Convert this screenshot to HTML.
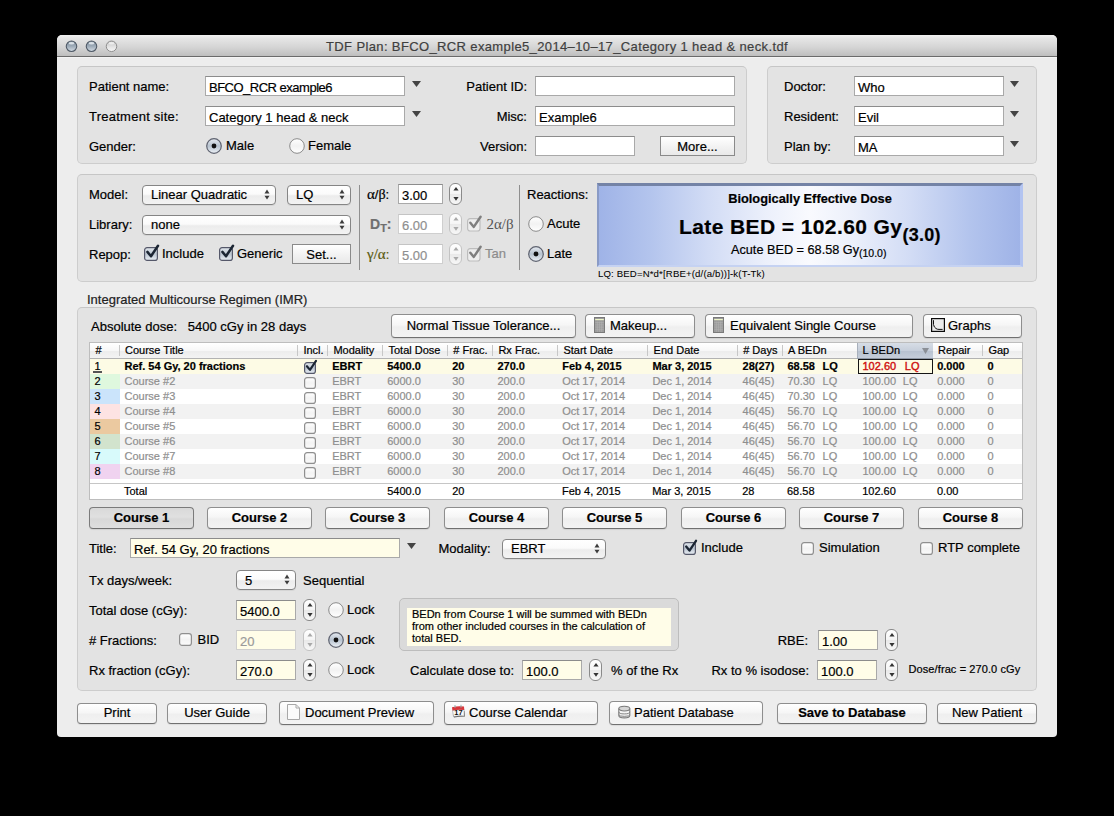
<!DOCTYPE html>
<html><head><meta charset="utf-8"><style>
html,body{margin:0;padding:0;}
body{width:1114px;height:816px;background:#000;position:relative;overflow:hidden;font-family:"Liberation Sans",sans-serif;color:#000;}
.a{position:absolute;}
.t{position:absolute;white-space:nowrap;-webkit-text-stroke-width:0.2px;}
</style></head><body>
<svg width="0" height="0" style="position:absolute"><defs>
<linearGradient id="cbg" x1="0" y1="0" x2="0" y2="1"><stop offset="0" stop-color="#e4e9ef"/><stop offset="0.5" stop-color="#bcc6d2"/><stop offset="1" stop-color="#e9eef4"/></linearGradient>
<linearGradient id="cbw" x1="0" y1="0" x2="0" y2="1"><stop offset="0" stop-color="#ffffff"/><stop offset="0.5" stop-color="#f3f3f3"/><stop offset="1" stop-color="#fbfbfb"/></linearGradient>
</defs></svg>

<div class="a" style="left:57px;top:35px;width:1000px;height:702px;background:#ededed;border-radius:5px 5px 4px 4px;overflow:hidden;"></div>
<div class="a" style="left:57px;top:35px;width:1000px;height:21px;border-radius:5px 5px 0 0;background:linear-gradient(#f2f2f2 0%,#e6e6e6 15%,#d4d4d4 60%,#bebebe 100%);"></div>
<div class="a" style="left:57px;top:56px;width:1000px;height:1px;background:#6a6a6a;"></div>
<div class="a" style="left:57px;top:57px;width:1000px;height:1px;background:#f4f4f4;"></div>
<svg class="a" style="left:64.5px;top:39.5px" width="13" height="13"><defs><linearGradient id="tl0" x1="0" y1="0" x2="0" y2="1"><stop offset="0" stop-color="#7c8a99"/><stop offset="0.5" stop-color="#9eacb9"/><stop offset="1" stop-color="#d5dde5"/></linearGradient></defs><circle cx="6.5" cy="6.3" r="5.25" fill="url(#tl0)" stroke="#4f5a66" stroke-width="1.1"/><ellipse cx="6.5" cy="3.3" rx="2.8" ry="1.3" fill="#e9eef3" opacity="0.85"/></svg>
<svg class="a" style="left:84.5px;top:39.5px" width="13" height="13"><defs><linearGradient id="tl1" x1="0" y1="0" x2="0" y2="1"><stop offset="0" stop-color="#7c8a99"/><stop offset="0.5" stop-color="#9eacb9"/><stop offset="1" stop-color="#d5dde5"/></linearGradient></defs><circle cx="6.5" cy="6.3" r="5.25" fill="url(#tl1)" stroke="#4f5a66" stroke-width="1.1"/><ellipse cx="6.5" cy="3.3" rx="2.8" ry="1.3" fill="#e9eef3" opacity="0.85"/></svg>
<svg class="a" style="left:104.5px;top:39.5px" width="13" height="13"><defs><linearGradient id="tl2" x1="0" y1="0" x2="0" y2="1"><stop offset="0" stop-color="#c4c4c4"/><stop offset="0.6" stop-color="#e6e6e6"/><stop offset="1" stop-color="#f6f6f6"/></linearGradient></defs><circle cx="6.5" cy="6.3" r="5.25" fill="url(#tl2)" stroke="#8e8e8e" stroke-width="1"/><ellipse cx="6.5" cy="3.3" rx="2.8" ry="1.2" fill="#f4f4f4" opacity="0.8"/></svg>
<div class="t" style="left:57px;width:1000px;text-align:center;top:40.00px;font-size:13px;line-height:13px;color:#3f3f3f;letter-spacing:0.37px;">TDF Plan: BFCO_RCR example5_2014&#8211;10&#8211;17_Category 1 head &amp; neck.tdf</div>
<div class="a" style="left:77px;top:66px;width:670px;height:98px;box-sizing:border-box;background:#e3e3e3;border:1px solid #cdcdcd;border-top-color:#c6c6c6;border-radius:5px;"></div>
<div class="t" style="left:89px;top:80.00px;font-size:13px;line-height:13px;">Patient name:</div>
<div class="a" style="left:205px;top:76px;width:200px;height:20px;box-sizing:border-box;background:#fff;border:1px solid #a9a9a9;border-top-color:#8c8c8c;"></div>
<div class="t" style="left:209px;top:81.00px;font-size:13px;line-height:13px;letter-spacing:-0.5px;">BFCO_RCR example6</div>
<svg class="a" style="left:412px;top:81px" width="9" height="6"><path d="M0 0H9L4.5 6Z" fill="#444"/></svg>
<div class="t" style="left:89px;top:110.00px;font-size:13px;line-height:13px;letter-spacing:0.25px;">Treatment site:</div>
<div class="a" style="left:205px;top:106px;width:200px;height:20px;box-sizing:border-box;background:#fff;border:1px solid #a9a9a9;border-top-color:#8c8c8c;"></div>
<div class="t" style="left:209px;top:111.00px;font-size:13px;line-height:13px;">Category 1 head &amp; neck</div>
<svg class="a" style="left:412px;top:111px" width="9" height="6"><path d="M0 0H9L4.5 6Z" fill="#444"/></svg>
<div class="t" style="left:89px;top:140.00px;font-size:13px;line-height:13px;">Gender:</div>
<svg class="a" style="left:206px;top:138px" width="16" height="16"><defs><linearGradient id="rg206138" x1="0" y1="0" x2="0" y2="1"><stop offset="0" stop-color="#e6ebf1"/><stop offset="0.5" stop-color="#b7c2cf"/><stop offset="1" stop-color="#edf2f7"/></linearGradient></defs><circle cx="8" cy="8" r="7.3" fill="url(#rg206138)" stroke="#5f6370" stroke-width="1.2"/><circle cx="8" cy="8" r="2.4" fill="#111"/></svg>
<div class="t" style="left:226px;top:139.00px;font-size:13px;line-height:13px;">Male</div>
<svg class="a" style="left:289px;top:138px" width="16" height="16"><defs><linearGradient id="rg289138" x1="0" y1="0" x2="0" y2="1"><stop offset="0" stop-color="#ffffff"/><stop offset="0.5" stop-color="#f2f2f2"/><stop offset="1" stop-color="#ffffff"/></linearGradient></defs><circle cx="8" cy="8" r="7.3" fill="url(#rg289138)" stroke="#8a8a8a" stroke-width="1"/></svg>
<div class="t" style="left:308px;top:139.00px;font-size:13px;line-height:13px;">Female</div>
<div class="t" style="right:587px;top:80.00px;font-size:13px;line-height:13px;">Patient ID:</div>
<div class="a" style="left:535px;top:76px;width:200px;height:20px;box-sizing:border-box;background:#fff;border:1px solid #a9a9a9;border-top-color:#8c8c8c;"></div>
<div class="t" style="right:587px;top:110.00px;font-size:13px;line-height:13px;">Misc:</div>
<div class="a" style="left:535px;top:106px;width:200px;height:20px;box-sizing:border-box;background:#fff;border:1px solid #a9a9a9;border-top-color:#8c8c8c;"></div>
<div class="t" style="left:539px;top:111.00px;font-size:13px;line-height:13px;">Example6</div>
<div class="t" style="right:587px;top:140.00px;font-size:13px;line-height:13px;">Version:</div>
<div class="a" style="left:535px;top:136px;width:100px;height:20px;box-sizing:border-box;background:#fff;border:1px solid #a9a9a9;border-top-color:#8c8c8c;"></div>
<div class="a" style="left:660px;top:136px;width:75px;height:20px;box-sizing:border-box;border:1px solid #8a8a8a;background:linear-gradient(#ffffff,#f1f1f1 60%,#e9e9e9);"></div>
<div class="t" style="left:660px;width:75px;text-align:center;top:140.00px;font-size:13px;line-height:13px;">More...</div>
<div class="a" style="left:767px;top:66px;width:270px;height:98px;box-sizing:border-box;background:#e3e3e3;border:1px solid #cdcdcd;border-top-color:#c6c6c6;border-radius:5px;"></div>
<div class="t" style="left:784px;top:80.00px;font-size:13px;line-height:13px;">Doctor:</div>
<div class="a" style="left:854px;top:76px;width:150px;height:20px;box-sizing:border-box;background:#fff;border:1px solid #a9a9a9;border-top-color:#8c8c8c;"></div>
<div class="t" style="left:858px;top:81.00px;font-size:13px;line-height:13px;">Who</div>
<svg class="a" style="left:1010px;top:81px" width="9" height="6"><path d="M0 0H9L4.5 6Z" fill="#444"/></svg>
<div class="t" style="left:784px;top:110.00px;font-size:13px;line-height:13px;">Resident:</div>
<div class="a" style="left:854px;top:106px;width:150px;height:20px;box-sizing:border-box;background:#fff;border:1px solid #a9a9a9;border-top-color:#8c8c8c;"></div>
<div class="t" style="left:858px;top:111.00px;font-size:13px;line-height:13px;">Evil</div>
<svg class="a" style="left:1010px;top:111px" width="9" height="6"><path d="M0 0H9L4.5 6Z" fill="#444"/></svg>
<div class="t" style="left:784px;top:140.00px;font-size:13px;line-height:13px;">Plan by:</div>
<div class="a" style="left:854px;top:136px;width:150px;height:20px;box-sizing:border-box;background:#fff;border:1px solid #a9a9a9;border-top-color:#8c8c8c;"></div>
<div class="t" style="left:858px;top:141.00px;font-size:13px;line-height:13px;">MA</div>
<svg class="a" style="left:1010px;top:141px" width="9" height="6"><path d="M0 0H9L4.5 6Z" fill="#444"/></svg>
<div class="a" style="left:77px;top:174px;width:960px;height:108px;box-sizing:border-box;background:#e3e3e3;border:1px solid #cdcdcd;border-top-color:#c6c6c6;border-radius:5px;"></div>
<div class="t" style="left:89px;top:188.00px;font-size:13px;line-height:13px;">Model:</div>
<div class="a" style="left:142px;top:185px;width:134px;height:20px;box-sizing:border-box;border:1px solid #858585;border-radius:4px;background:linear-gradient(#ffffff 0%,#fbfbfb 45%,#ececec 55%,#f3f3f3 100%);box-shadow:0 1px 0 rgba(0,0,0,0.06);"></div>
<div class="t" style="left:151px;top:188.00px;font-size:13px;line-height:13px;">Linear Quadratic</div>
<svg class="a" style="left:264px;top:189.0px" width="6" height="12"><path d="M0.5 4.4H5.5L3 0.6Z M0.5 6.8H5.5L3 10.6Z" fill="#3c3c3c"/></svg>
<div class="a" style="left:287px;top:185px;width:64px;height:20px;box-sizing:border-box;border:1px solid #858585;border-radius:4px;background:linear-gradient(#ffffff 0%,#fbfbfb 45%,#ececec 55%,#f3f3f3 100%);box-shadow:0 1px 0 rgba(0,0,0,0.06);"></div>
<div class="t" style="left:296px;top:188.00px;font-size:13px;line-height:13px;">LQ</div>
<svg class="a" style="left:339px;top:189.0px" width="6" height="12"><path d="M0.5 4.4H5.5L3 0.6Z M0.5 6.8H5.5L3 10.6Z" fill="#3c3c3c"/></svg>
<div class="t" style="left:89px;top:218.00px;font-size:13px;line-height:13px;">Library:</div>
<div class="a" style="left:142px;top:215px;width:209px;height:20px;box-sizing:border-box;border:1px solid #858585;border-radius:4px;background:linear-gradient(#ffffff 0%,#fbfbfb 45%,#ececec 55%,#f3f3f3 100%);box-shadow:0 1px 0 rgba(0,0,0,0.06);"></div>
<div class="t" style="left:151px;top:218.00px;font-size:13px;line-height:13px;">none</div>
<svg class="a" style="left:339px;top:219.0px" width="6" height="12"><path d="M0.5 4.4H5.5L3 0.6Z M0.5 6.8H5.5L3 10.6Z" fill="#3c3c3c"/></svg>
<div class="t" style="left:89px;top:248.00px;font-size:13px;line-height:13px;">Repop:</div>
<svg class="a" style="left:144px;top:244px;overflow:visible" width="16" height="17"><rect x="0.6" y="3.6" width="12.8" height="12.8" rx="2.5" fill="url(#cbg)" stroke="#55586a" stroke-width="1.2"/><path d="M3.40 7.90L7.00 12.20L14.00 1.70" fill="none" stroke="#1b2533" stroke-width="2.50" stroke-linecap="round" stroke-linejoin="round"/></svg>
<div class="t" style="left:162px;top:247.00px;font-size:13px;line-height:13px;">Include</div>
<svg class="a" style="left:219px;top:244px;overflow:visible" width="16" height="17"><rect x="0.6" y="3.6" width="12.8" height="12.8" rx="2.5" fill="url(#cbg)" stroke="#55586a" stroke-width="1.2"/><path d="M3.40 7.90L7.00 12.20L14.00 1.70" fill="none" stroke="#1b2533" stroke-width="2.50" stroke-linecap="round" stroke-linejoin="round"/></svg>
<div class="t" style="left:237px;top:247.00px;font-size:13px;line-height:13px;">Generic</div>
<div class="a" style="left:292px;top:244px;width:59px;height:20px;box-sizing:border-box;border:1px solid #8a8a8a;background:linear-gradient(#ffffff,#f1f1f1 60%,#e9e9e9);"></div>
<div class="t" style="left:292px;width:59px;text-align:center;top:248.00px;font-size:13px;line-height:13px;">Set...</div>
<div class="a" style="left:359px;top:185px;width:1px;height:85px;background:#8f8f8f;"></div>
<div class="t" style="left:367px;top:188.00px;font-size:13px;line-height:13px;"><span style="font-family:Liberation Serif,serif;font-size:15px">&#945;</span>/<span style="font-family:Liberation Serif,serif;font-size:14px">&#946;</span>:</div>
<div class="a" style="left:398px;top:184px;width:45px;height:20px;box-sizing:border-box;background:#fff;border:1px solid #a9a9a9;border-top-color:#8c8c8c;"></div>
<div class="t" style="left:402px;top:188.50px;font-size:13px;line-height:13px;">3.00</div>
<div class="a" style="left:449px;top:183px;width:13px;height:22px;box-sizing:border-box;border:1px solid #8a8a8a;border-radius:6px;background:linear-gradient(#fff,#f5f5f5 48%,#e9e9e9 52%,#f7f7f7);"></div>
<svg class="a" style="left:452.5px;top:183px" width="6" height="22"><path d="M0.4 7.6H5.6L3 3.9Z M0.4 14H5.6L3 17.8Z" fill="#333"/></svg>
<div class="t" style="left:370px;top:217.15px;font-size:14px;line-height:14px;font-weight:bold;color:#6f6f6f;">D<span style="font-size:11px;position:relative;top:3px">T</span>:</div>
<div class="a" style="left:398px;top:214px;width:45px;height:20px;box-sizing:border-box;background:#fff;border:1px solid #cfcfcf;border-top-color:#c4c4c4;"></div>
<div class="t" style="left:402px;top:218.50px;font-size:13px;line-height:13px;color:#8f8f8f;">6.00</div>
<div class="a" style="left:449px;top:213px;width:13px;height:22px;box-sizing:border-box;border:1px solid #c3c3c3;border-radius:6px;background:linear-gradient(#fff,#f5f5f5 48%,#e9e9e9 52%,#f7f7f7);"></div>
<svg class="a" style="left:452.5px;top:213px" width="6" height="22"><path d="M0.4 7.6H5.6L3 3.9Z M0.4 14H5.6L3 17.8Z" fill="#a9a9a9"/></svg>
<svg class="a" style="left:467px;top:215px;overflow:visible" width="15.6" height="16.6"><rect x="0.6" y="3.6" width="12.4" height="12.4" rx="2.5" fill="#eeeeee" stroke="#bdbdbd" stroke-width="1.2"/><path d="M3.30 7.76L6.80 11.94L13.60 1.74" fill="none" stroke="#7f7f7f" stroke-width="2.43" stroke-linecap="round" stroke-linejoin="round"/></svg>
<div class="t" style="left:486.5px;top:217.30px;font-size:15px;line-height:15px;color:#555;font-family:Liberation Serif,serif;-webkit-text-stroke-width:0;">2&#945;/&#946;</div>
<div class="t" style="left:367px;top:248.00px;font-size:13px;line-height:13px;color:#5a5a10;"><span style="font-family:Liberation Serif,serif;font-size:15px">&#947;/&#945;</span>:</div>
<div class="a" style="left:398px;top:244px;width:45px;height:20px;box-sizing:border-box;background:#fff;border:1px solid #cfcfcf;border-top-color:#c4c4c4;"></div>
<div class="t" style="left:402px;top:248.50px;font-size:13px;line-height:13px;color:#8f8f8f;">5.00</div>
<div class="a" style="left:449px;top:243px;width:13px;height:22px;box-sizing:border-box;border:1px solid #c3c3c3;border-radius:6px;background:linear-gradient(#fff,#f5f5f5 48%,#e9e9e9 52%,#f7f7f7);"></div>
<svg class="a" style="left:452.5px;top:243px" width="6" height="22"><path d="M0.4 7.6H5.6L3 3.9Z M0.4 14H5.6L3 17.8Z" fill="#a9a9a9"/></svg>
<svg class="a" style="left:467px;top:245px;overflow:visible" width="15.6" height="16.6"><rect x="0.6" y="3.6" width="12.4" height="12.4" rx="2.5" fill="#eeeeee" stroke="#bdbdbd" stroke-width="1.2"/><path d="M3.30 7.76L6.80 11.94L13.60 1.74" fill="none" stroke="#7f7f7f" stroke-width="2.43" stroke-linecap="round" stroke-linejoin="round"/></svg>
<div class="t" style="left:485px;top:247.00px;font-size:13px;line-height:13px;color:#8c8c8c;">Tan</div>
<div class="a" style="left:519px;top:185px;width:1px;height:85px;background:#8f8f8f;"></div>
<div class="t" style="left:527px;top:188.00px;font-size:13px;line-height:13px;">Reactions:</div>
<svg class="a" style="left:528px;top:216px" width="16" height="16"><defs><linearGradient id="rg528216" x1="0" y1="0" x2="0" y2="1"><stop offset="0" stop-color="#ffffff"/><stop offset="0.5" stop-color="#f2f2f2"/><stop offset="1" stop-color="#ffffff"/></linearGradient></defs><circle cx="8" cy="8" r="7.3" fill="url(#rg528216)" stroke="#8a8a8a" stroke-width="1"/></svg>
<div class="t" style="left:547px;top:217.00px;font-size:13px;line-height:13px;">Acute</div>
<svg class="a" style="left:528px;top:246px" width="16" height="16"><defs><linearGradient id="rg528246" x1="0" y1="0" x2="0" y2="1"><stop offset="0" stop-color="#e6ebf1"/><stop offset="0.5" stop-color="#b7c2cf"/><stop offset="1" stop-color="#edf2f7"/></linearGradient></defs><circle cx="8" cy="8" r="7.3" fill="url(#rg528246)" stroke="#5f6370" stroke-width="1.2"/><circle cx="8" cy="8" r="2.4" fill="#111"/></svg>
<div class="t" style="left:547px;top:247.00px;font-size:13px;line-height:13px;">Late</div>
<div class="a" style="left:597px;top:183px;width:426px;height:84px;box-sizing:border-box;border-top:3px solid #7483a6;border-left:2px solid #8a9bc6;border-right:3px solid #b3c4f1;border-bottom:2px solid #c5d2f2;background:linear-gradient(90deg,#9fb3e7 0%,#b3c4ed 12%,#d2dcf5 26%,#ecf0fb 40%,#f9fafe 50%,#ecf0fb 60%,#d2dcf5 74%,#b3c4ed 88%,#9fb3e7 100%);"></div>
<div class="t" style="left:597px;width:426px;text-align:center;top:193.16px;font-size:12.8px;line-height:12.8px;font-weight:bold;">Biologically Effective Dose</div>
<div class="t" style="left:679px;top:215.72px;font-size:21px;line-height:21px;font-weight:bold;letter-spacing:0.4px;">Late BED = 102.60 Gy<span style="font-size:18px;position:relative;top:7px;letter-spacing:0.3px">(3.0)</span></div>
<div class="t" style="left:731px;top:244.25px;font-size:12.7px;line-height:12.7px;">Acute BED = 68.58 Gy<span style="font-size:10.5px;position:relative;top:3px">(10.0)</span></div>
<div class="t" style="left:598px;top:268.87px;font-size:9.6px;line-height:9.6px;letter-spacing:0.15px;-webkit-text-stroke-width:0.05px;">LQ: BED=N*d*[RBE+(d/(a/b))]-k(T-Tk)</div>
<div class="t" style="left:87px;top:293.00px;font-size:13px;line-height:13px;color:#222;">Integrated Multicourse Regimen (IMR)</div>
<div class="a" style="left:77px;top:307px;width:960px;height:384px;box-sizing:border-box;background:#e3e3e3;border:1px solid #cdcdcd;border-top-color:#c6c6c6;border-radius:5px;"></div>
<div class="t" style="left:91px;top:320.00px;font-size:13px;line-height:13px;">Absolute dose:&nbsp;&nbsp; 5400 cGy in 28 days</div>
<div class="a" style="left:391px;top:314px;width:185px;height:24px;box-sizing:border-box;border:1px solid #8e8e8e;border-bottom-color:#707070;border-radius:4px;background:linear-gradient(#ffffff,#f6f6f6 45%,#efefef 55%,#f3f3f3);box-shadow:0 1px 1px rgba(0,0,0,0.08);"></div>
<div class="t" style="left:391px;width:185px;text-align:center;top:319.00px;font-size:13px;line-height:13px;">Normal Tissue Tolerance...</div>
<div class="a" style="left:585px;top:314px;width:110px;height:24px;box-sizing:border-box;border:1px solid #8e8e8e;border-bottom-color:#707070;border-radius:4px;background:linear-gradient(#ffffff,#f6f6f6 45%,#efefef 55%,#f3f3f3);box-shadow:0 1px 1px rgba(0,0,0,0.08);"></div>
<div class="t" style="left:610px;top:319.00px;font-size:13px;line-height:13px;">Makeup...</div>
<svg class="a" style="left:594px;top:317px" width="11" height="16"><rect x="0.5" y="0.5" width="10" height="15" fill="#9c9c9c" stroke="#7a7a7a"/><rect x="1.2" y="2" width="8.6" height="1.2" fill="#eef6c8"/><path d="M1.2 5.5H9.8M1.2 7.8H9.8M1.2 10.1H9.8M1.2 12.4H9.8M3.4 4.5V15M5.5 4.5V15M7.6 4.5V15" stroke="#b0b0b0" stroke-width="0.6"/></svg>
<div class="a" style="left:705px;top:314px;width:208px;height:24px;box-sizing:border-box;border:1px solid #8e8e8e;border-bottom-color:#707070;border-radius:4px;background:linear-gradient(#ffffff,#f6f6f6 45%,#efefef 55%,#f3f3f3);box-shadow:0 1px 1px rgba(0,0,0,0.08);"></div>
<div class="t" style="left:730px;top:319.00px;font-size:13px;line-height:13px;">Equivalent Single Course</div>
<svg class="a" style="left:713px;top:317px" width="11" height="16"><rect x="0.5" y="0.5" width="10" height="15" fill="#9c9c9c" stroke="#7a7a7a"/><rect x="1.2" y="2" width="8.6" height="1.2" fill="#eef6c8"/><path d="M1.2 5.5H9.8M1.2 7.8H9.8M1.2 10.1H9.8M1.2 12.4H9.8M3.4 4.5V15M5.5 4.5V15M7.6 4.5V15" stroke="#b0b0b0" stroke-width="0.6"/></svg>
<div class="a" style="left:923px;top:314px;width:99px;height:24px;box-sizing:border-box;border:1px solid #8e8e8e;border-bottom-color:#707070;border-radius:4px;background:linear-gradient(#ffffff,#f6f6f6 45%,#efefef 55%,#f3f3f3);box-shadow:0 1px 1px rgba(0,0,0,0.08);"></div>
<div class="t" style="left:948px;top:319.00px;font-size:13px;line-height:13px;">Graphs</div>
<svg class="a" style="left:931px;top:318px" width="14" height="14"><rect x="0.6" y="0.6" width="12.8" height="12.8" fill="#ececec" stroke="#0a0a0a" stroke-width="1.2"/><path d="M2.5 2.2V6.5Q3 9.5 5 10.5Q6 11.4 8 11.4H11.6" fill="none" stroke="#111" stroke-width="1"/></svg>
<div class="a" style="left:89px;top:342px;width:934px;height:158px;box-sizing:border-box;background:#fff;border:1px solid #bdbdbd;"></div>
<div class="a" style="left:90px;top:343px;width:932px;height:15px;background:linear-gradient(#ffffff,#f7f7f7 50%,#ececec 51%,#f3f3f3);border-bottom:1px solid #b2b2b2;"></div>
<div class="a" style="left:857px;top:343px;width:75px;height:15px;background:linear-gradient(#d7dde6,#c7cfdb 50%,#b7c1cf 51%,#c5cdd9);border-bottom:1px solid #8f98a6;border-left:1px solid #a8b0bc;"></div>
<div class="a" style="left:119px;top:345px;width:1px;height:11px;background:#c7c7c7;"></div>
<div class="a" style="left:297px;top:345px;width:1px;height:11px;background:#c7c7c7;"></div>
<div class="a" style="left:327px;top:345px;width:1px;height:11px;background:#c7c7c7;"></div>
<div class="a" style="left:382px;top:345px;width:1px;height:11px;background:#c7c7c7;"></div>
<div class="a" style="left:447px;top:345px;width:1px;height:11px;background:#c7c7c7;"></div>
<div class="a" style="left:492px;top:345px;width:1px;height:11px;background:#c7c7c7;"></div>
<div class="a" style="left:557px;top:345px;width:1px;height:11px;background:#c7c7c7;"></div>
<div class="a" style="left:647px;top:345px;width:1px;height:11px;background:#c7c7c7;"></div>
<div class="a" style="left:737px;top:345px;width:1px;height:11px;background:#c7c7c7;"></div>
<div class="a" style="left:782px;top:345px;width:1px;height:11px;background:#c7c7c7;"></div>
<div class="a" style="left:982px;top:345px;width:1px;height:11px;background:#c7c7c7;"></div>
<div class="t" style="left:95.6px;top:344.69px;font-size:11px;line-height:11px;">#</div>
<div class="t" style="left:125px;top:344.69px;font-size:11px;line-height:11px;">Course Title</div>
<div class="t" style="left:303.4px;top:344.69px;font-size:11px;line-height:11px;">Incl.</div>
<div class="t" style="left:333.4px;top:344.69px;font-size:11px;line-height:11px;">Modality</div>
<div class="t" style="left:388.5px;top:344.69px;font-size:11px;line-height:11px;">Total Dose</div>
<div class="t" style="left:453.3px;top:344.69px;font-size:11px;line-height:11px;"># Frac.</div>
<div class="t" style="left:498.4px;top:344.69px;font-size:11px;line-height:11px;">Rx Frac.</div>
<div class="t" style="left:563.4px;top:344.69px;font-size:11px;line-height:11px;">Start Date</div>
<div class="t" style="left:653.6px;top:344.69px;font-size:11px;line-height:11px;">End Date</div>
<div class="t" style="left:743.2px;top:344.69px;font-size:11px;line-height:11px;"># Days</div>
<div class="t" style="left:788px;top:344.69px;font-size:11px;line-height:11px;">A BEDn</div>
<div class="t" style="left:862.5px;top:344.69px;font-size:11px;line-height:11px;">L BEDn</div>
<div class="t" style="left:938px;top:344.69px;font-size:11px;line-height:11px;">Repair</div>
<div class="t" style="left:988.4px;top:344.69px;font-size:11px;line-height:11px;">Gap</div>
<svg class="a" style="left:922px;top:348px" width="7" height="6"><path d="M0 0H7L3.5 6Z" fill="#8b8f96"/></svg>
<div class="a" style="left:90px;top:359px;width:932px;height:15px;background:#fdfbe5;"></div>
<div class="a" style="left:90px;top:359px;width:30px;height:15px;background:#fdfbe5;"></div>
<div class="t" style="left:94.5px;top:360.69px;font-size:11px;line-height:11px;">1</div>
<div class="a" style="left:93px;top:371px;width:9px;height:1.8px;background:#555;"></div>
<div class="t" style="left:124.5px;top:360.69px;font-size:11px;line-height:11px;font-weight:bold;">Ref. 54 Gy, 20 fractions</div>
<div class="t" style="left:332.2px;top:360.69px;font-size:11px;line-height:11px;font-weight:bold;">EBRT</div>
<div class="t" style="left:387.2px;top:360.69px;font-size:11px;line-height:11px;font-weight:bold;">5400.0</div>
<div class="t" style="left:452.2px;top:360.69px;font-size:11px;line-height:11px;font-weight:bold;">20</div>
<div class="t" style="left:497.4px;top:360.69px;font-size:11px;line-height:11px;font-weight:bold;">270.0</div>
<div class="t" style="left:562.2px;top:360.69px;font-size:11px;line-height:11px;font-weight:bold;">Feb 4, 2015</div>
<div class="t" style="left:652.4px;top:360.69px;font-size:11px;line-height:11px;font-weight:bold;">Mar 3, 2015</div>
<div class="t" style="left:742.6px;top:360.69px;font-size:11px;line-height:11px;font-weight:bold;">28(27)</div>
<div class="t" style="left:787.4px;top:360.69px;font-size:11px;line-height:11px;font-weight:bold;">68.58</div>
<div class="t" style="left:937.2px;top:360.69px;font-size:11px;line-height:11px;font-weight:bold;">0.000</div>
<div class="t" style="left:987.4px;top:360.69px;font-size:11px;line-height:11px;font-weight:bold;">0</div>
<div class="t" style="left:822.6px;top:360.69px;font-size:11px;line-height:11px;font-weight:bold;">LQ</div>
<svg class="a" style="left:304px;top:358.5px;overflow:visible" width="14" height="15"><rect x="0.6" y="3.6" width="10.8" height="10.8" rx="2.5" fill="url(#cbg)" stroke="#55586a" stroke-width="1.2"/><path d="M2.91 7.20L6.00 10.89L12.00 1.89" fill="none" stroke="#1b2533" stroke-width="2.14" stroke-linecap="round" stroke-linejoin="round"/></svg>
<div class="t" style="left:862.5px;top:360.69px;font-size:11px;line-height:11px;color:#cf1111;-webkit-text-stroke:0.4px #cf1111;">102.60</div>
<div class="t" style="left:904.8px;top:360.69px;font-size:11px;line-height:11px;color:#cf1111;-webkit-text-stroke:0.4px #cf1111;">LQ</div>
<div class="a" style="left:90px;top:374px;width:932px;height:15px;background:#f2f2f2;"></div>
<div class="a" style="left:90px;top:374px;width:30px;height:15px;background:#dff8de;"></div>
<div class="t" style="left:94.5px;top:375.69px;font-size:11px;line-height:11px;">2</div>
<div class="t" style="left:124.5px;top:375.69px;font-size:11px;line-height:11px;color:#8e8e8e;">Course #2</div>
<div class="t" style="left:332.2px;top:375.69px;font-size:11px;line-height:11px;color:#8e8e8e;">EBRT</div>
<div class="t" style="left:387.2px;top:375.69px;font-size:11px;line-height:11px;color:#8e8e8e;">6000.0</div>
<div class="t" style="left:452.2px;top:375.69px;font-size:11px;line-height:11px;color:#8e8e8e;">30</div>
<div class="t" style="left:497.4px;top:375.69px;font-size:11px;line-height:11px;color:#8e8e8e;">200.0</div>
<div class="t" style="left:562.2px;top:375.69px;font-size:11px;line-height:11px;color:#8e8e8e;">Oct 17, 2014</div>
<div class="t" style="left:652.4px;top:375.69px;font-size:11px;line-height:11px;color:#8e8e8e;">Dec 1, 2014</div>
<div class="t" style="left:742.6px;top:375.69px;font-size:11px;line-height:11px;color:#8e8e8e;">46(45)</div>
<div class="t" style="left:787.4px;top:375.69px;font-size:11px;line-height:11px;color:#8e8e8e;">70.30</div>
<div class="t" style="left:862.4px;top:375.69px;font-size:11px;line-height:11px;color:#8e8e8e;">100.00</div>
<div class="t" style="left:937.2px;top:375.69px;font-size:11px;line-height:11px;color:#8e8e8e;">0.000</div>
<div class="t" style="left:987.4px;top:375.69px;font-size:11px;line-height:11px;color:#8e8e8e;">0</div>
<div class="t" style="left:822.6px;top:375.69px;font-size:11px;line-height:11px;color:#8e8e8e;">LQ</div>
<div class="t" style="left:902.8px;top:375.69px;font-size:11px;line-height:11px;color:#8e8e8e;">LQ</div>
<svg class="a" style="left:304px;top:373.5px;overflow:visible" width="14" height="15"><rect x="0.6" y="3.6" width="10.8" height="10.8" rx="2.5" fill="url(#cbw)" stroke="#8f8f8f" stroke-width="1.2"/></svg>
<div class="a" style="left:90px;top:389px;width:932px;height:15px;background:#ffffff;"></div>
<div class="a" style="left:90px;top:389px;width:30px;height:15px;background:#cbe4fb;"></div>
<div class="t" style="left:94.5px;top:390.69px;font-size:11px;line-height:11px;">3</div>
<div class="t" style="left:124.5px;top:390.69px;font-size:11px;line-height:11px;color:#8e8e8e;">Course #3</div>
<div class="t" style="left:332.2px;top:390.69px;font-size:11px;line-height:11px;color:#8e8e8e;">EBRT</div>
<div class="t" style="left:387.2px;top:390.69px;font-size:11px;line-height:11px;color:#8e8e8e;">6000.0</div>
<div class="t" style="left:452.2px;top:390.69px;font-size:11px;line-height:11px;color:#8e8e8e;">30</div>
<div class="t" style="left:497.4px;top:390.69px;font-size:11px;line-height:11px;color:#8e8e8e;">200.0</div>
<div class="t" style="left:562.2px;top:390.69px;font-size:11px;line-height:11px;color:#8e8e8e;">Oct 17, 2014</div>
<div class="t" style="left:652.4px;top:390.69px;font-size:11px;line-height:11px;color:#8e8e8e;">Dec 1, 2014</div>
<div class="t" style="left:742.6px;top:390.69px;font-size:11px;line-height:11px;color:#8e8e8e;">46(45)</div>
<div class="t" style="left:787.4px;top:390.69px;font-size:11px;line-height:11px;color:#8e8e8e;">70.30</div>
<div class="t" style="left:862.4px;top:390.69px;font-size:11px;line-height:11px;color:#8e8e8e;">100.00</div>
<div class="t" style="left:937.2px;top:390.69px;font-size:11px;line-height:11px;color:#8e8e8e;">0.000</div>
<div class="t" style="left:987.4px;top:390.69px;font-size:11px;line-height:11px;color:#8e8e8e;">0</div>
<div class="t" style="left:822.6px;top:390.69px;font-size:11px;line-height:11px;color:#8e8e8e;">LQ</div>
<div class="t" style="left:902.8px;top:390.69px;font-size:11px;line-height:11px;color:#8e8e8e;">LQ</div>
<svg class="a" style="left:304px;top:388.5px;overflow:visible" width="14" height="15"><rect x="0.6" y="3.6" width="10.8" height="10.8" rx="2.5" fill="url(#cbw)" stroke="#8f8f8f" stroke-width="1.2"/></svg>
<div class="a" style="left:90px;top:404px;width:932px;height:15px;background:#f2f2f2;"></div>
<div class="a" style="left:90px;top:404px;width:30px;height:15px;background:#fde3e3;"></div>
<div class="t" style="left:94.5px;top:405.69px;font-size:11px;line-height:11px;">4</div>
<div class="t" style="left:124.5px;top:405.69px;font-size:11px;line-height:11px;color:#8e8e8e;">Course #4</div>
<div class="t" style="left:332.2px;top:405.69px;font-size:11px;line-height:11px;color:#8e8e8e;">EBRT</div>
<div class="t" style="left:387.2px;top:405.69px;font-size:11px;line-height:11px;color:#8e8e8e;">6000.0</div>
<div class="t" style="left:452.2px;top:405.69px;font-size:11px;line-height:11px;color:#8e8e8e;">30</div>
<div class="t" style="left:497.4px;top:405.69px;font-size:11px;line-height:11px;color:#8e8e8e;">200.0</div>
<div class="t" style="left:562.2px;top:405.69px;font-size:11px;line-height:11px;color:#8e8e8e;">Oct 17, 2014</div>
<div class="t" style="left:652.4px;top:405.69px;font-size:11px;line-height:11px;color:#8e8e8e;">Dec 1, 2014</div>
<div class="t" style="left:742.6px;top:405.69px;font-size:11px;line-height:11px;color:#8e8e8e;">46(45)</div>
<div class="t" style="left:787.4px;top:405.69px;font-size:11px;line-height:11px;color:#8e8e8e;">56.70</div>
<div class="t" style="left:862.4px;top:405.69px;font-size:11px;line-height:11px;color:#8e8e8e;">100.00</div>
<div class="t" style="left:937.2px;top:405.69px;font-size:11px;line-height:11px;color:#8e8e8e;">0.000</div>
<div class="t" style="left:987.4px;top:405.69px;font-size:11px;line-height:11px;color:#8e8e8e;">0</div>
<div class="t" style="left:822.6px;top:405.69px;font-size:11px;line-height:11px;color:#8e8e8e;">LQ</div>
<div class="t" style="left:902.8px;top:405.69px;font-size:11px;line-height:11px;color:#8e8e8e;">LQ</div>
<svg class="a" style="left:304px;top:403.5px;overflow:visible" width="14" height="15"><rect x="0.6" y="3.6" width="10.8" height="10.8" rx="2.5" fill="url(#cbw)" stroke="#8f8f8f" stroke-width="1.2"/></svg>
<div class="a" style="left:90px;top:419px;width:932px;height:15px;background:#ffffff;"></div>
<div class="a" style="left:90px;top:419px;width:30px;height:15px;background:#ebc9a0;"></div>
<div class="t" style="left:94.5px;top:420.69px;font-size:11px;line-height:11px;">5</div>
<div class="t" style="left:124.5px;top:420.69px;font-size:11px;line-height:11px;color:#8e8e8e;">Course #5</div>
<div class="t" style="left:332.2px;top:420.69px;font-size:11px;line-height:11px;color:#8e8e8e;">EBRT</div>
<div class="t" style="left:387.2px;top:420.69px;font-size:11px;line-height:11px;color:#8e8e8e;">6000.0</div>
<div class="t" style="left:452.2px;top:420.69px;font-size:11px;line-height:11px;color:#8e8e8e;">30</div>
<div class="t" style="left:497.4px;top:420.69px;font-size:11px;line-height:11px;color:#8e8e8e;">200.0</div>
<div class="t" style="left:562.2px;top:420.69px;font-size:11px;line-height:11px;color:#8e8e8e;">Oct 17, 2014</div>
<div class="t" style="left:652.4px;top:420.69px;font-size:11px;line-height:11px;color:#8e8e8e;">Dec 1, 2014</div>
<div class="t" style="left:742.6px;top:420.69px;font-size:11px;line-height:11px;color:#8e8e8e;">46(45)</div>
<div class="t" style="left:787.4px;top:420.69px;font-size:11px;line-height:11px;color:#8e8e8e;">56.70</div>
<div class="t" style="left:862.4px;top:420.69px;font-size:11px;line-height:11px;color:#8e8e8e;">100.00</div>
<div class="t" style="left:937.2px;top:420.69px;font-size:11px;line-height:11px;color:#8e8e8e;">0.000</div>
<div class="t" style="left:987.4px;top:420.69px;font-size:11px;line-height:11px;color:#8e8e8e;">0</div>
<div class="t" style="left:822.6px;top:420.69px;font-size:11px;line-height:11px;color:#8e8e8e;">LQ</div>
<div class="t" style="left:902.8px;top:420.69px;font-size:11px;line-height:11px;color:#8e8e8e;">LQ</div>
<svg class="a" style="left:304px;top:418.5px;overflow:visible" width="14" height="15"><rect x="0.6" y="3.6" width="10.8" height="10.8" rx="2.5" fill="url(#cbw)" stroke="#8f8f8f" stroke-width="1.2"/></svg>
<div class="a" style="left:90px;top:434px;width:932px;height:15px;background:#f2f2f2;"></div>
<div class="a" style="left:90px;top:434px;width:30px;height:15px;background:#d2e3cd;"></div>
<div class="t" style="left:94.5px;top:435.69px;font-size:11px;line-height:11px;">6</div>
<div class="t" style="left:124.5px;top:435.69px;font-size:11px;line-height:11px;color:#8e8e8e;">Course #6</div>
<div class="t" style="left:332.2px;top:435.69px;font-size:11px;line-height:11px;color:#8e8e8e;">EBRT</div>
<div class="t" style="left:387.2px;top:435.69px;font-size:11px;line-height:11px;color:#8e8e8e;">6000.0</div>
<div class="t" style="left:452.2px;top:435.69px;font-size:11px;line-height:11px;color:#8e8e8e;">30</div>
<div class="t" style="left:497.4px;top:435.69px;font-size:11px;line-height:11px;color:#8e8e8e;">200.0</div>
<div class="t" style="left:562.2px;top:435.69px;font-size:11px;line-height:11px;color:#8e8e8e;">Oct 17, 2014</div>
<div class="t" style="left:652.4px;top:435.69px;font-size:11px;line-height:11px;color:#8e8e8e;">Dec 1, 2014</div>
<div class="t" style="left:742.6px;top:435.69px;font-size:11px;line-height:11px;color:#8e8e8e;">46(45)</div>
<div class="t" style="left:787.4px;top:435.69px;font-size:11px;line-height:11px;color:#8e8e8e;">56.70</div>
<div class="t" style="left:862.4px;top:435.69px;font-size:11px;line-height:11px;color:#8e8e8e;">100.00</div>
<div class="t" style="left:937.2px;top:435.69px;font-size:11px;line-height:11px;color:#8e8e8e;">0.000</div>
<div class="t" style="left:987.4px;top:435.69px;font-size:11px;line-height:11px;color:#8e8e8e;">0</div>
<div class="t" style="left:822.6px;top:435.69px;font-size:11px;line-height:11px;color:#8e8e8e;">LQ</div>
<div class="t" style="left:902.8px;top:435.69px;font-size:11px;line-height:11px;color:#8e8e8e;">LQ</div>
<svg class="a" style="left:304px;top:433.5px;overflow:visible" width="14" height="15"><rect x="0.6" y="3.6" width="10.8" height="10.8" rx="2.5" fill="url(#cbw)" stroke="#8f8f8f" stroke-width="1.2"/></svg>
<div class="a" style="left:90px;top:449px;width:932px;height:15px;background:#ffffff;"></div>
<div class="a" style="left:90px;top:449px;width:30px;height:15px;background:#d8fafb;"></div>
<div class="t" style="left:94.5px;top:450.69px;font-size:11px;line-height:11px;">7</div>
<div class="t" style="left:124.5px;top:450.69px;font-size:11px;line-height:11px;color:#8e8e8e;">Course #7</div>
<div class="t" style="left:332.2px;top:450.69px;font-size:11px;line-height:11px;color:#8e8e8e;">EBRT</div>
<div class="t" style="left:387.2px;top:450.69px;font-size:11px;line-height:11px;color:#8e8e8e;">6000.0</div>
<div class="t" style="left:452.2px;top:450.69px;font-size:11px;line-height:11px;color:#8e8e8e;">30</div>
<div class="t" style="left:497.4px;top:450.69px;font-size:11px;line-height:11px;color:#8e8e8e;">200.0</div>
<div class="t" style="left:562.2px;top:450.69px;font-size:11px;line-height:11px;color:#8e8e8e;">Oct 17, 2014</div>
<div class="t" style="left:652.4px;top:450.69px;font-size:11px;line-height:11px;color:#8e8e8e;">Dec 1, 2014</div>
<div class="t" style="left:742.6px;top:450.69px;font-size:11px;line-height:11px;color:#8e8e8e;">46(45)</div>
<div class="t" style="left:787.4px;top:450.69px;font-size:11px;line-height:11px;color:#8e8e8e;">56.70</div>
<div class="t" style="left:862.4px;top:450.69px;font-size:11px;line-height:11px;color:#8e8e8e;">100.00</div>
<div class="t" style="left:937.2px;top:450.69px;font-size:11px;line-height:11px;color:#8e8e8e;">0.000</div>
<div class="t" style="left:987.4px;top:450.69px;font-size:11px;line-height:11px;color:#8e8e8e;">0</div>
<div class="t" style="left:822.6px;top:450.69px;font-size:11px;line-height:11px;color:#8e8e8e;">LQ</div>
<div class="t" style="left:902.8px;top:450.69px;font-size:11px;line-height:11px;color:#8e8e8e;">LQ</div>
<svg class="a" style="left:304px;top:448.5px;overflow:visible" width="14" height="15"><rect x="0.6" y="3.6" width="10.8" height="10.8" rx="2.5" fill="url(#cbw)" stroke="#8f8f8f" stroke-width="1.2"/></svg>
<div class="a" style="left:90px;top:464px;width:932px;height:15px;background:#f2f2f2;"></div>
<div class="a" style="left:90px;top:464px;width:30px;height:15px;background:#f0d3f0;"></div>
<div class="t" style="left:94.5px;top:465.69px;font-size:11px;line-height:11px;">8</div>
<div class="t" style="left:124.5px;top:465.69px;font-size:11px;line-height:11px;color:#8e8e8e;">Course #8</div>
<div class="t" style="left:332.2px;top:465.69px;font-size:11px;line-height:11px;color:#8e8e8e;">EBRT</div>
<div class="t" style="left:387.2px;top:465.69px;font-size:11px;line-height:11px;color:#8e8e8e;">6000.0</div>
<div class="t" style="left:452.2px;top:465.69px;font-size:11px;line-height:11px;color:#8e8e8e;">30</div>
<div class="t" style="left:497.4px;top:465.69px;font-size:11px;line-height:11px;color:#8e8e8e;">200.0</div>
<div class="t" style="left:562.2px;top:465.69px;font-size:11px;line-height:11px;color:#8e8e8e;">Oct 17, 2014</div>
<div class="t" style="left:652.4px;top:465.69px;font-size:11px;line-height:11px;color:#8e8e8e;">Dec 1, 2014</div>
<div class="t" style="left:742.6px;top:465.69px;font-size:11px;line-height:11px;color:#8e8e8e;">46(45)</div>
<div class="t" style="left:787.4px;top:465.69px;font-size:11px;line-height:11px;color:#8e8e8e;">56.70</div>
<div class="t" style="left:862.4px;top:465.69px;font-size:11px;line-height:11px;color:#8e8e8e;">100.00</div>
<div class="t" style="left:937.2px;top:465.69px;font-size:11px;line-height:11px;color:#8e8e8e;">0.000</div>
<div class="t" style="left:987.4px;top:465.69px;font-size:11px;line-height:11px;color:#8e8e8e;">0</div>
<div class="t" style="left:822.6px;top:465.69px;font-size:11px;line-height:11px;color:#8e8e8e;">LQ</div>
<div class="t" style="left:902.8px;top:465.69px;font-size:11px;line-height:11px;color:#8e8e8e;">LQ</div>
<svg class="a" style="left:304px;top:463.5px;overflow:visible" width="14" height="15"><rect x="0.6" y="3.6" width="10.8" height="10.8" rx="2.5" fill="url(#cbw)" stroke="#8f8f8f" stroke-width="1.2"/></svg>
<div class="a" style="left:90px;top:483px;width:932px;height:1px;background:#c6c6c6;"></div>
<div class="a" style="left:857.5px;top:359px;width:75.5px;height:15.3px;box-sizing:border-box;border:1.5px solid #151515;"></div>
<div class="t" style="left:124px;top:486.49px;font-size:11px;line-height:11px;">Total</div>
<div class="t" style="left:387.2px;top:486.49px;font-size:11px;line-height:11px;">5400.0</div>
<div class="t" style="left:452.2px;top:486.49px;font-size:11px;line-height:11px;">20</div>
<div class="t" style="left:562px;top:486.49px;font-size:11px;line-height:11px;">Feb 4, 2015</div>
<div class="t" style="left:652.2px;top:486.49px;font-size:11px;line-height:11px;">Mar 3, 2015</div>
<div class="t" style="left:742.2px;top:486.49px;font-size:11px;line-height:11px;">28</div>
<div class="t" style="left:787px;top:486.49px;font-size:11px;line-height:11px;">68.58</div>
<div class="t" style="left:862.2px;top:486.49px;font-size:11px;line-height:11px;">102.60</div>
<div class="t" style="left:937px;top:486.49px;font-size:11px;line-height:11px;">0.00</div>
<div class="a" style="left:89px;top:507px;width:105px;height:21.6px;box-sizing:border-box;border:1px solid #7b7b7b;border-bottom-color:#707070;border-radius:4px;background:linear-gradient(#d9d9d9,#e0e0e0 45%,#d8d8d8 55%,#dfdfdf);box-shadow:0 1px 1px rgba(0,0,0,0.08);"></div>
<div class="t" style="left:89px;width:105px;text-align:center;top:511.00px;font-size:13px;line-height:13px;font-weight:bold;">Course 1</div>
<div class="a" style="left:207px;top:507px;width:105px;height:21.6px;box-sizing:border-box;border:1px solid #8e8e8e;border-bottom-color:#707070;border-radius:4px;background:linear-gradient(#ffffff,#f6f6f6 45%,#efefef 55%,#f3f3f3);box-shadow:0 1px 1px rgba(0,0,0,0.08);"></div>
<div class="t" style="left:207px;width:105px;text-align:center;top:511.00px;font-size:13px;line-height:13px;font-weight:bold;">Course 2</div>
<div class="a" style="left:325px;top:507px;width:105px;height:21.6px;box-sizing:border-box;border:1px solid #8e8e8e;border-bottom-color:#707070;border-radius:4px;background:linear-gradient(#ffffff,#f6f6f6 45%,#efefef 55%,#f3f3f3);box-shadow:0 1px 1px rgba(0,0,0,0.08);"></div>
<div class="t" style="left:325px;width:105px;text-align:center;top:511.00px;font-size:13px;line-height:13px;font-weight:bold;">Course 3</div>
<div class="a" style="left:444px;top:507px;width:105px;height:21.6px;box-sizing:border-box;border:1px solid #8e8e8e;border-bottom-color:#707070;border-radius:4px;background:linear-gradient(#ffffff,#f6f6f6 45%,#efefef 55%,#f3f3f3);box-shadow:0 1px 1px rgba(0,0,0,0.08);"></div>
<div class="t" style="left:444px;width:105px;text-align:center;top:511.00px;font-size:13px;line-height:13px;font-weight:bold;">Course 4</div>
<div class="a" style="left:562px;top:507px;width:105px;height:21.6px;box-sizing:border-box;border:1px solid #8e8e8e;border-bottom-color:#707070;border-radius:4px;background:linear-gradient(#ffffff,#f6f6f6 45%,#efefef 55%,#f3f3f3);box-shadow:0 1px 1px rgba(0,0,0,0.08);"></div>
<div class="t" style="left:562px;width:105px;text-align:center;top:511.00px;font-size:13px;line-height:13px;font-weight:bold;">Course 5</div>
<div class="a" style="left:681px;top:507px;width:105px;height:21.6px;box-sizing:border-box;border:1px solid #8e8e8e;border-bottom-color:#707070;border-radius:4px;background:linear-gradient(#ffffff,#f6f6f6 45%,#efefef 55%,#f3f3f3);box-shadow:0 1px 1px rgba(0,0,0,0.08);"></div>
<div class="t" style="left:681px;width:105px;text-align:center;top:511.00px;font-size:13px;line-height:13px;font-weight:bold;">Course 6</div>
<div class="a" style="left:799px;top:507px;width:105px;height:21.6px;box-sizing:border-box;border:1px solid #8e8e8e;border-bottom-color:#707070;border-radius:4px;background:linear-gradient(#ffffff,#f6f6f6 45%,#efefef 55%,#f3f3f3);box-shadow:0 1px 1px rgba(0,0,0,0.08);"></div>
<div class="t" style="left:799px;width:105px;text-align:center;top:511.00px;font-size:13px;line-height:13px;font-weight:bold;">Course 7</div>
<div class="a" style="left:918px;top:507px;width:105px;height:21.6px;box-sizing:border-box;border:1px solid #8e8e8e;border-bottom-color:#707070;border-radius:4px;background:linear-gradient(#ffffff,#f6f6f6 45%,#efefef 55%,#f3f3f3);box-shadow:0 1px 1px rgba(0,0,0,0.08);"></div>
<div class="t" style="left:918px;width:105px;text-align:center;top:511.00px;font-size:13px;line-height:13px;font-weight:bold;">Course 8</div>
<div class="t" style="left:89px;top:542.00px;font-size:13px;line-height:13px;">Title:</div>
<div class="a" style="left:130px;top:538px;width:270px;height:20px;box-sizing:border-box;background:#fffde8;border:1px solid #a9a9a9;border-top-color:#8c8c8c;"></div>
<div class="t" style="left:134px;top:542.50px;font-size:13px;line-height:13px;">Ref. 54 Gy, 20 fractions</div>
<svg class="a" style="left:407px;top:543px" width="9" height="6"><path d="M0 0H9L4.5 6Z" fill="#444"/></svg>
<div class="t" style="left:438.5px;top:542.00px;font-size:13px;line-height:13px;">Modality:</div>
<div class="a" style="left:502px;top:538.5px;width:104px;height:20px;box-sizing:border-box;border:1px solid #858585;border-radius:4px;background:linear-gradient(#ffffff 0%,#fbfbfb 45%,#ececec 55%,#f3f3f3 100%);box-shadow:0 1px 0 rgba(0,0,0,0.06);"></div>
<div class="t" style="left:511px;top:542.00px;font-size:13px;line-height:13px;">EBRT</div>
<svg class="a" style="left:594px;top:542.5px" width="6" height="12"><path d="M0.5 4.4H5.5L3 0.6Z M0.5 6.8H5.5L3 10.6Z" fill="#3c3c3c"/></svg>
<svg class="a" style="left:683px;top:539px;overflow:visible" width="15" height="16"><rect x="0.6" y="3.6" width="11.8" height="11.8" rx="2.5" fill="url(#cbg)" stroke="#55586a" stroke-width="1.2"/><path d="M3.16 7.55L6.50 11.54L13.00 1.79" fill="none" stroke="#1b2533" stroke-width="2.32" stroke-linecap="round" stroke-linejoin="round"/></svg>
<div class="t" style="left:701px;top:541.00px;font-size:13px;line-height:13px;">Include</div>
<svg class="a" style="left:801px;top:539px;overflow:visible" width="15" height="16"><rect x="0.6" y="3.6" width="11.8" height="11.8" rx="2.5" fill="url(#cbw)" stroke="#8f8f8f" stroke-width="1.2"/></svg>
<div class="t" style="left:819px;top:541.00px;font-size:13px;line-height:13px;">Simulation</div>
<svg class="a" style="left:920px;top:539px;overflow:visible" width="15" height="16"><rect x="0.6" y="3.6" width="11.8" height="11.8" rx="2.5" fill="url(#cbw)" stroke="#8f8f8f" stroke-width="1.2"/></svg>
<div class="t" style="left:938px;top:541.00px;font-size:13px;line-height:13px;">RTP complete</div>
<div class="t" style="left:89px;top:574.00px;font-size:13px;line-height:13px;">Tx days/week:</div>
<div class="a" style="left:236px;top:570px;width:60px;height:20px;box-sizing:border-box;border:1px solid #858585;border-radius:4px;background:linear-gradient(#ffffff 0%,#fbfbfb 45%,#ececec 55%,#f3f3f3 100%);box-shadow:0 1px 0 rgba(0,0,0,0.06);"></div>
<div class="t" style="left:245px;top:574.00px;font-size:13px;line-height:13px;">5</div>
<svg class="a" style="left:284px;top:574.0px" width="6" height="12"><path d="M0.5 4.4H5.5L3 0.6Z M0.5 6.8H5.5L3 10.6Z" fill="#3c3c3c"/></svg>
<div class="t" style="left:303px;top:574.00px;font-size:13px;line-height:13px;">Sequential</div>
<div class="t" style="left:89px;top:604.00px;font-size:13px;line-height:13px;">Total dose (cGy):</div>
<div class="a" style="left:236px;top:600px;width:60px;height:20px;box-sizing:border-box;background:#fffde8;border:1px solid #a9a9a9;border-top-color:#8c8c8c;"></div>
<div class="t" style="left:240px;top:604.50px;font-size:13px;line-height:13px;">5400.0</div>
<div class="a" style="left:303px;top:599px;width:13px;height:22px;box-sizing:border-box;border:1px solid #8a8a8a;border-radius:6px;background:linear-gradient(#fff,#f5f5f5 48%,#e9e9e9 52%,#f7f7f7);"></div>
<svg class="a" style="left:306.5px;top:599px" width="6" height="22"><path d="M0.4 7.6H5.6L3 3.9Z M0.4 14H5.6L3 17.8Z" fill="#333"/></svg>
<svg class="a" style="left:328px;top:602px" width="16" height="16"><defs><linearGradient id="rg328602" x1="0" y1="0" x2="0" y2="1"><stop offset="0" stop-color="#ffffff"/><stop offset="0.5" stop-color="#f2f2f2"/><stop offset="1" stop-color="#ffffff"/></linearGradient></defs><circle cx="8" cy="8" r="7.3" fill="url(#rg328602)" stroke="#8a8a8a" stroke-width="1"/></svg>
<div class="t" style="left:347px;top:603.00px;font-size:13px;line-height:13px;">Lock</div>
<div class="t" style="left:89px;top:634.00px;font-size:13px;line-height:13px;"># Fractions:</div>
<svg class="a" style="left:179px;top:630px;overflow:visible" width="15" height="16"><rect x="0.6" y="3.6" width="11.8" height="11.8" rx="2.5" fill="url(#cbw)" stroke="#8f8f8f" stroke-width="1.2"/></svg>
<div class="t" style="left:197.5px;top:633.00px;font-size:13px;line-height:13px;">BID</div>
<div class="a" style="left:236px;top:630px;width:60px;height:20px;box-sizing:border-box;background:#fffde8;border:1px solid #cfcfcf;border-top-color:#c4c4c4;"></div>
<div class="t" style="left:240px;top:634.50px;font-size:13px;line-height:13px;color:#9a9a9a;">20</div>
<div class="a" style="left:303px;top:629px;width:13px;height:22px;box-sizing:border-box;border:1px solid #c3c3c3;border-radius:6px;background:linear-gradient(#fff,#f5f5f5 48%,#e9e9e9 52%,#f7f7f7);"></div>
<svg class="a" style="left:306.5px;top:629px" width="6" height="22"><path d="M0.4 7.6H5.6L3 3.9Z M0.4 14H5.6L3 17.8Z" fill="#a9a9a9"/></svg>
<svg class="a" style="left:328px;top:632px" width="16" height="16"><defs><linearGradient id="rg328632" x1="0" y1="0" x2="0" y2="1"><stop offset="0" stop-color="#e6ebf1"/><stop offset="0.5" stop-color="#b7c2cf"/><stop offset="1" stop-color="#edf2f7"/></linearGradient></defs><circle cx="8" cy="8" r="7.3" fill="url(#rg328632)" stroke="#5f6370" stroke-width="1.2"/><circle cx="8" cy="8" r="2.4" fill="#111"/></svg>
<div class="t" style="left:347px;top:633.00px;font-size:13px;line-height:13px;">Lock</div>
<div class="t" style="left:89px;top:664.00px;font-size:13px;line-height:13px;">Rx fraction (cGy):</div>
<div class="a" style="left:236px;top:660px;width:60px;height:20px;box-sizing:border-box;background:#fffde8;border:1px solid #a9a9a9;border-top-color:#8c8c8c;"></div>
<div class="t" style="left:240px;top:664.50px;font-size:13px;line-height:13px;">270.0</div>
<div class="a" style="left:303px;top:659px;width:13px;height:22px;box-sizing:border-box;border:1px solid #8a8a8a;border-radius:6px;background:linear-gradient(#fff,#f5f5f5 48%,#e9e9e9 52%,#f7f7f7);"></div>
<svg class="a" style="left:306.5px;top:659px" width="6" height="22"><path d="M0.4 7.6H5.6L3 3.9Z M0.4 14H5.6L3 17.8Z" fill="#333"/></svg>
<svg class="a" style="left:328px;top:662px" width="16" height="16"><defs><linearGradient id="rg328662" x1="0" y1="0" x2="0" y2="1"><stop offset="0" stop-color="#ffffff"/><stop offset="0.5" stop-color="#f2f2f2"/><stop offset="1" stop-color="#ffffff"/></linearGradient></defs><circle cx="8" cy="8" r="7.3" fill="url(#rg328662)" stroke="#8a8a8a" stroke-width="1"/></svg>
<div class="t" style="left:347px;top:663.00px;font-size:13px;line-height:13px;">Lock</div>
<div class="a" style="left:399px;top:598px;width:280px;height:53px;box-sizing:border-box;background:#dadada;border:1px solid #bdbdbd;border-radius:5px;"></div>
<div class="a" style="left:407px;top:608px;width:264px;height:38px;background:#fffde8;"></div>
<div class="t" style="left:412px;top:609.19px;font-size:11px;line-height:11px;">BEDn from Course 1 will be summed with BEDn</div>
<div class="t" style="left:412px;top:621.19px;font-size:11px;line-height:11px;">from other included courses in the calculation of</div>
<div class="t" style="left:412px;top:633.19px;font-size:11px;line-height:11px;">total BED.</div>
<div class="t" style="left:410px;top:664.00px;font-size:13px;line-height:13px;">Calculate dose to:</div>
<div class="a" style="left:522px;top:660px;width:60px;height:20px;box-sizing:border-box;background:#fffde8;border:1px solid #a9a9a9;border-top-color:#8c8c8c;"></div>
<div class="t" style="left:526px;top:664.50px;font-size:13px;line-height:13px;">100.0</div>
<div class="a" style="left:589px;top:659px;width:13px;height:22px;box-sizing:border-box;border:1px solid #8a8a8a;border-radius:6px;background:linear-gradient(#fff,#f5f5f5 48%,#e9e9e9 52%,#f7f7f7);"></div>
<svg class="a" style="left:592.5px;top:659px" width="6" height="22"><path d="M0.4 7.6H5.6L3 3.9Z M0.4 14H5.6L3 17.8Z" fill="#333"/></svg>
<div class="t" style="left:611px;top:664.00px;font-size:13px;line-height:13px;">% of the Rx</div>
<div class="t" style="right:306px;top:634.00px;font-size:13px;line-height:13px;">RBE:</div>
<div class="a" style="left:818px;top:630px;width:60px;height:20px;box-sizing:border-box;background:#fffde8;border:1px solid #a9a9a9;border-top-color:#8c8c8c;"></div>
<div class="t" style="left:822px;top:634.50px;font-size:13px;line-height:13px;">1.00</div>
<div class="a" style="left:885px;top:629px;width:13px;height:22px;box-sizing:border-box;border:1px solid #8a8a8a;border-radius:6px;background:linear-gradient(#fff,#f5f5f5 48%,#e9e9e9 52%,#f7f7f7);"></div>
<svg class="a" style="left:888.5px;top:629px" width="6" height="22"><path d="M0.4 7.6H5.6L3 3.9Z M0.4 14H5.6L3 17.8Z" fill="#333"/></svg>
<div class="t" style="right:305px;top:664.00px;font-size:13px;line-height:13px;">Rx to % isodose:</div>
<div class="a" style="left:817px;top:660px;width:60px;height:20px;box-sizing:border-box;background:#fffde8;border:1px solid #a9a9a9;border-top-color:#8c8c8c;"></div>
<div class="t" style="left:821px;top:664.50px;font-size:13px;line-height:13px;">100.0</div>
<div class="a" style="left:885px;top:659px;width:13px;height:22px;box-sizing:border-box;border:1px solid #8a8a8a;border-radius:6px;background:linear-gradient(#fff,#f5f5f5 48%,#e9e9e9 52%,#f7f7f7);"></div>
<svg class="a" style="left:888.5px;top:659px" width="6" height="22"><path d="M0.4 7.6H5.6L3 3.9Z M0.4 14H5.6L3 17.8Z" fill="#333"/></svg>
<div class="t" style="left:908.5px;top:663.69px;font-size:11px;line-height:11px;letter-spacing:0.1px;">Dose/frac = 270.0 cGy</div>
<div class="a" style="left:77px;top:703px;width:80px;height:21px;box-sizing:border-box;border:1px solid #8e8e8e;border-bottom-color:#707070;border-radius:4px;background:linear-gradient(#ffffff,#f6f6f6 45%,#efefef 55%,#f3f3f3);box-shadow:0 1px 1px rgba(0,0,0,0.08);"></div>
<div class="t" style="left:77px;width:80px;text-align:center;top:706.00px;font-size:13px;line-height:13px;">Print</div>
<div class="a" style="left:167px;top:703px;width:100px;height:21px;box-sizing:border-box;border:1px solid #8e8e8e;border-bottom-color:#707070;border-radius:4px;background:linear-gradient(#ffffff,#f6f6f6 45%,#efefef 55%,#f3f3f3);box-shadow:0 1px 1px rgba(0,0,0,0.08);"></div>
<div class="t" style="left:167px;width:100px;text-align:center;top:706.00px;font-size:13px;line-height:13px;">User Guide</div>
<div class="a" style="left:279px;top:701px;width:155px;height:24px;box-sizing:border-box;border:1px solid #8e8e8e;border-bottom-color:#707070;border-radius:4px;background:linear-gradient(#ffffff,#f6f6f6 45%,#efefef 55%,#f3f3f3);box-shadow:0 1px 1px rgba(0,0,0,0.08);"></div>
<div class="t" style="left:305px;top:706.00px;font-size:13px;line-height:13px;">Document Preview</div>
<svg class="a" style="left:287px;top:704px" width="13" height="16"><path d="M0.5 0.5H9L12.5 4V15.5H0.5Z" fill="#fbfbfb" stroke="#a8a8a8"/><path d="M9 0.5V4H12.5" fill="none" stroke="#a8a8a8"/></svg>
<div class="a" style="left:444px;top:701px;width:154px;height:24px;box-sizing:border-box;border:1px solid #8e8e8e;border-bottom-color:#707070;border-radius:4px;background:linear-gradient(#ffffff,#f6f6f6 45%,#efefef 55%,#f3f3f3);box-shadow:0 1px 1px rgba(0,0,0,0.08);"></div>
<div class="t" style="left:469px;top:706.00px;font-size:13px;line-height:13px;">Course Calendar</div>
<svg class="a" style="left:451px;top:704px" width="16" height="16"><path d="M2 10.5L3 13.5Q8 12.5 14 12.5L13.5 7Z" fill="#555"/><path d="M1.5 6.5L2.5 12.5Q8 11.5 13.2 12L13 5.5Q7 5 1.5 6.5Z" fill="#fafafa" stroke="#999" stroke-width="0.6"/><path d="M1 3.2Q7 1.8 13 2.6L13.3 6Q7 5.2 1.4 6.6Z" fill="#d8373c"/><path d="M4 1V4M10 0.8V3.8" stroke="#8aa" stroke-width="0.9"/><text x="7.4" y="11.3" font-size="7.5" font-weight="bold" text-anchor="middle" font-family="Liberation Sans" fill="#111">17</text></svg>
<div class="a" style="left:609px;top:701px;width:154px;height:24px;box-sizing:border-box;border:1px solid #8e8e8e;border-bottom-color:#707070;border-radius:4px;background:linear-gradient(#ffffff,#f6f6f6 45%,#efefef 55%,#f3f3f3);box-shadow:0 1px 1px rgba(0,0,0,0.08);"></div>
<div class="t" style="left:634px;top:706.00px;font-size:13px;line-height:13px;">Patient Database</div>
<svg class="a" style="left:618px;top:705px" width="13" height="14"><g fill="none" stroke="#7c7c7c" stroke-width="1.1"><path d="M0.8 3.6V10.6Q0.8 12.9 6.3 12.9Q11.8 12.9 11.8 10.6V3.6"/><path d="M0.8 6.8Q0.8 8.9 6.3 8.9Q11.8 8.9 11.8 6.8M0.8 9.6Q0.8 11.4 6.3 11.4Q11.8 11.4 11.8 9.6" stroke-width="0.9"/></g><ellipse cx="6.3" cy="3.6" rx="5.5" ry="2.4" fill="#d6d6d6" stroke="#7c7c7c" stroke-width="1.1"/></svg>
<div class="a" style="left:777px;top:703px;width:150px;height:21px;box-sizing:border-box;border:1px solid #8e8e8e;border-bottom-color:#707070;border-radius:4px;background:linear-gradient(#ffffff,#f6f6f6 45%,#efefef 55%,#f3f3f3);box-shadow:0 1px 1px rgba(0,0,0,0.08);"></div>
<div class="t" style="left:777px;width:150px;text-align:center;top:706.00px;font-size:13px;line-height:13px;font-weight:bold;">Save to Database</div>
<div class="a" style="left:937px;top:703px;width:100px;height:21px;box-sizing:border-box;border:1px solid #8e8e8e;border-bottom-color:#707070;border-radius:4px;background:linear-gradient(#ffffff,#f6f6f6 45%,#efefef 55%,#f3f3f3);box-shadow:0 1px 1px rgba(0,0,0,0.08);"></div>
<div class="t" style="left:937px;width:100px;text-align:center;top:706.00px;font-size:13px;line-height:13px;">New Patient</div>
</body></html>
